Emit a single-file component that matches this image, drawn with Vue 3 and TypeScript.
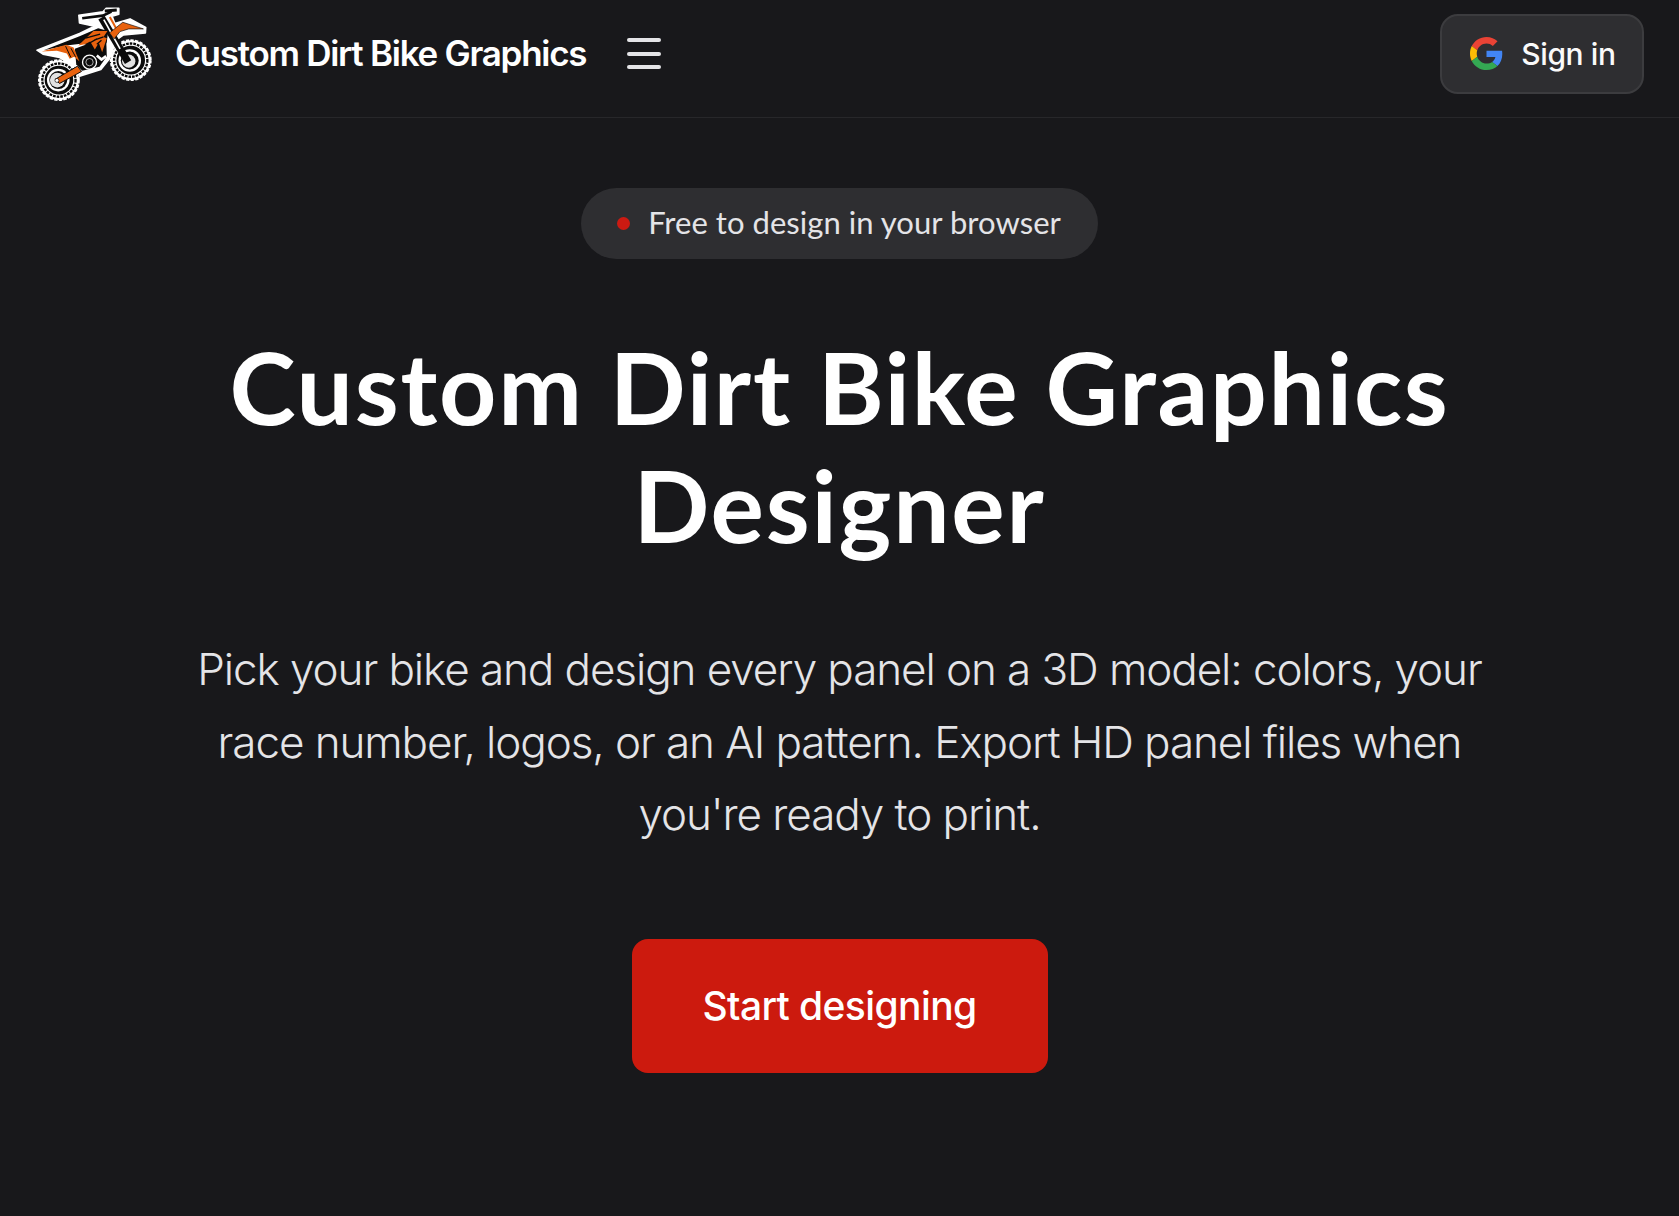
<script setup lang="ts">
const title = 'Custom Dirt Bike Graphics'
</script>

<template>
  <div class="page">
    <header class="bar">
      <div class="brand">
        <svg class="logo" viewBox="100 15 370 290" aria-hidden="true">
          <!-- white sticker outline -->
          <path d="M112,150 L240,100 L285,78 L240,68 L238,45 L310,35 L320,24 L358,24 L358,42 L338,48 L346,70 L392,56 L439,82 L438,98 L372,104 L350,120 L330,176 L304,208 L240,228 L226,198 L180,172 L130,162 Z" fill="#fff" stroke="#fff" stroke-width="5" stroke-linejoin="round" />
          <circle cx="178" cy="240" r="60" fill="#fff" stroke="#fff" stroke-width="6" stroke-dasharray="10 4" />
          <circle cx="394" cy="180" r="60" fill="#fff" stroke="#fff" stroke-width="6" stroke-dasharray="10 4" />
          <circle cx="178" cy="240" r="50" fill="none" stroke="#0b0b0b" stroke-width="7" stroke-dasharray="8 3" />
          <circle cx="394" cy="180" r="50" fill="none" stroke="#0b0b0b" stroke-width="7" stroke-dasharray="8 3" />
          <circle cx="178" cy="240" r="43" fill="#0b0b0b" />
          <circle cx="394" cy="180" r="43" fill="#0b0b0b" />
          <circle cx="176" cy="240" r="34" fill="#fff" />
          <circle cx="391" cy="181" r="34" fill="#fff" />
          <circle cx="176" cy="240" r="27" fill="#0b0b0b" />
          <circle cx="391" cy="181" r="27" fill="#0b0b0b" />
          <circle cx="173" cy="240" r="22" fill="#e2e2e2" />
          <circle cx="388" cy="183" r="20" fill="#e2e2e2" />
          <!-- frame and engine -->
          <path d="M226,146 L320,110 L322,168 L300,200 L248,212 L230,192 Z" fill="#0b0b0b" />
          <circle cx="270" cy="186" r="21" fill="#0b0b0b" stroke="#fff" stroke-width="4" />
          <circle cx="270" cy="186" r="11" fill="none" stroke="#fff" stroke-width="2" />
          <path d="M292,166 L306,178 L320,168" fill="none" stroke="#fff" stroke-width="8" />
          <!-- swingarm -->
          <path d="M166,238 L234,198 L246,214 L180,250 Z" fill="#e8620f" stroke="#0b0b0b" stroke-width="3" />
          <circle cx="172" cy="241" r="6" fill="#fff" stroke="#0b0b0b" stroke-width="2" />
          <!-- forks and bars -->
          <path d="M248,54 L310,46 L336,34" fill="none" stroke="#0b0b0b" stroke-width="8" />
          <path d="M316,32 L352,29" fill="none" stroke="#0b0b0b" stroke-width="9" />
          <path d="M306,52 L386,186" fill="none" stroke="#0b0b0b" stroke-width="22" />
          <path d="M313,58 L362,146" fill="none" stroke="#fff" stroke-width="5" />
          <path d="M331,50 L352,88" fill="none" stroke="#e8620f" stroke-width="6" />
          <!-- seat and bodywork -->
          <path d="M132,150 L240,108 L296,84 L326,92 L322,126 L304,160 L292,132 L282,144 L250,130 L200,136 Z" fill="#0b0b0b" />
          <path d="M126,154 L200,134 L222,142 L240,184 L224,170 L210,176 L202,160 L172,152 Z" fill="#e8620f" />
          <path d="M198,138 L214,172 M214,144 L228,170" stroke="#0b0b0b" stroke-width="3" fill="none" />
          <path d="M236,136 L282,92 L324,92 L312,110 L322,114 L308,156 L298,128 L286,148 L272,124 L256,132 Z" fill="#e8620f" />
          <path d="M258,114 L302,102 M284,120 L312,110 M268,130 L292,116 M292,132 L306,120" stroke="#0b0b0b" stroke-width="4" fill="none" />
          <path d="M330,98 L370,66 L432,86 L388,86 L362,94 L344,116 Z" fill="#e8620f" stroke="#0b0b0b" stroke-width="2" />
        </svg>
        <span class="title">{{ title }}</span>
        <button class="menu" aria-label="Menu">
          <span></span><span></span><span></span>
        </button>
      </div>
      <button class="signin">
        <svg class="g" viewBox="0 0 48 48" aria-hidden="true">
          <path fill="#EA4335" d="M24 9.5c3.54 0 6.71 1.22 9.21 3.6l6.85-6.85C35.9 2.38 30.47 0 24 0 14.62 0 6.51 5.38 2.56 13.22l7.98 6.19C12.43 13.72 17.74 9.5 24 9.5z" />
          <path fill="#4285F4" d="M46.98 24.55c0-1.57-.15-3.09-.38-4.55H24v9.02h12.94c-.58 2.96-2.26 5.48-4.78 7.18l7.73 6c4.51-4.18 7.09-10.36 7.09-17.65z" />
          <path fill="#FBBC05" d="M10.53 28.59c-.48-1.45-.76-2.99-.76-4.59s.27-3.14.76-4.59l-7.98-6.19C.92 16.46 0 20.12 0 24c0 3.88.92 7.54 2.56 10.78l7.97-6.19z" />
          <path fill="#34A853" d="M24 48c6.48 0 11.93-2.13 15.89-5.81l-7.73-6c-2.15 1.45-4.92 2.3-8.16 2.3-6.26 0-11.57-4.22-13.47-9.91l-7.98 6.19C6.51 42.62 14.62 48 24 48z" />
        </svg>
        <span>Sign in</span>
      </button>
    </header>

    <main class="hero">
      <div class="pill"><i class="dot"></i><span class="pill-text">Free to design in your browser</span></div>
      <h1>Custom Dirt Bike Graphics<br />Designer</h1>
      <p class="lead">Pick your bike and design every panel on a 3D model: colors, your race number, logos, or an AI pattern. Export HD panel files when you're ready to print.</p>
      <button class="cta">Start designing</button>
    </main>
  </div>
</template>

<style>
html, body { margin: 0; background: #18181b; }
</style>

<style scoped>
.page {
  min-height: 1216px;
  background: #18181b;
  color: #fff;
  font-family: Inter, "Liberation Sans", sans-serif;
}
.bar {
  height: 118px;
  box-sizing: border-box;
  border-bottom: 1px solid #27272a;
  display: flex;
  align-items: center;
  justify-content: space-between;
  padding: 0 35px 10px 33px;
}
.brand { display: flex; align-items: center; }
.logo { width: 123px; height: 97px; display: block; flex: none; margin-right: 19px; }
.title {
  font-size: 35px;
  font-weight: 600;
  letter-spacing: -1.27px;
  line-height: 1;
}
.menu {
  margin-left: 41px;
  width: 34px;
  height: 31px;
  padding: 0;
  border: 0;
  background: none;
  display: flex;
  flex-direction: column;
  justify-content: space-between;
}
.menu span { display: block; height: 4px; border-radius: 2px; background: #e4e4e7; }
.signin {
  width: 204px;
  height: 80px;
  box-sizing: border-box;
  background: #2e2e31;
  border: 2px solid #3c3c3f;
  border-radius: 18px;
  display: flex;
  align-items: center;
  justify-content: center;
  gap: 18px;
  color: #fafafa;
  font: 500 30px Inter, sans-serif;
  letter-spacing: -0.4px;
  padding: 0 0 0 2px;
}
.g { width: 33px; height: 33px; flex: none; }
.hero {
  display: flex;
  flex-direction: column;
  align-items: center;
  padding-top: 70px;
}
.pill {
  display: flex;
  align-items: center;
  gap: 18px;
  height: 71px;
  box-sizing: border-box;
  padding: 0 37px 0 36px;
  border-radius: 36px;
  background: #2e2e31;
  color: #e4e4e7;
  font: 400 31px Lato, sans-serif;
  letter-spacing: 0.04px;
}
.pill-text { margin-bottom: 4px; }
.dot { width: 13px; height: 13px; border-radius: 50%; background: #cc1a12; }
h1 {
  margin: 68px 0 0;
  text-align: center;
  font: 700 100px/118px Lato, sans-serif;
  letter-spacing: 1.75px;
  color: #fff;
}
.lead {
  margin: 70px 0 0;
  width: 1300px;
  text-align: center;
  font-size: 44px;
  line-height: 72.6px;
  font-weight: 300;
  letter-spacing: -1.08px;
  color: #e4e4e7;
}
.cta {
  margin-top: 88px;
  width: 416px;
  height: 134px;
  border: 0;
  border-radius: 16px;
  background: #cc1a0e;
  color: #fff;
  font: 500 39px Inter, sans-serif;
  letter-spacing: -0.6px;
}
</style>
